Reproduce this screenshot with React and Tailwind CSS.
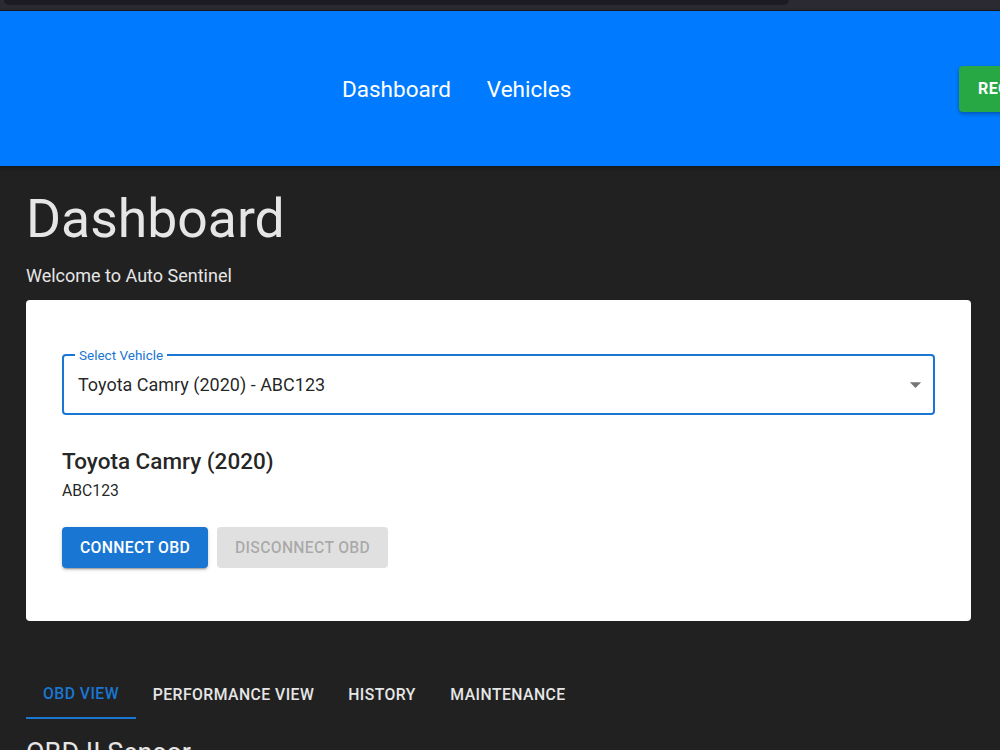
export default function App() {
  return (
    <div className="min-h-screen bg-[#212121] font-['Roboto',sans-serif] overflow-hidden">
      {/* Browser strip */}
      <div className="h-[11px] bg-[#2b2a33] border-b border-[#18181c] relative">
        <div className="absolute left-[4px] top-0 w-[785px] h-[5px] bg-[#1c1b22] rounded-b-md" />
      </div>

      {/* App bar */}
      <div className="h-[155px] bg-[#007bff] flex items-center overflow-hidden shadow-[0_2px_4px_rgba(0,0,0,0.35)] relative z-10">
        <div className="w-[959px] shrink-0 pl-[342px] pt-[2px] flex gap-9 text-white text-[22.5px] leading-none">
          <span>Dashboard</span>
          <span>Vehicles</span>
        </div>
        <button className="shrink-0 h-[46px] pl-[19px] pr-6 bg-[#28a745] text-white font-bold text-[16px] tracking-wide rounded-l-[4px] shadow-[0_2px_4px_rgba(0,0,0,0.3)]">
          REGISTER
        </button>
      </div>

      {/* Content */}
      <div className="px-[26px] pt-[21px]">
        <h1 className="text-[53.5px] font-normal leading-[63px] text-[#e6e6e6]">Dashboard</h1>
        <p className="mt-3 text-[18px] leading-[27px] text-[#e6e6e6]">Welcome to Auto Sentinel</p>

        <div className="mt-[11px] w-[945px] bg-white rounded pt-[54px] px-9 pb-[53px]">
          <div className="relative h-[61px] border-2 border-[#1976d2] rounded flex items-center pl-[14px] pr-[4px]">
            <span className="absolute -top-[10px] left-[11px] px-[4px] bg-white text-[13.5px] leading-[18px] text-[#1976d2]">
              Select Vehicle
            </span>
            <span className="flex-1 text-[18px] text-[rgba(0,0,0,0.87)]">Toyota Camry (2020) - ABC123</span>
            <svg width="27" height="27" viewBox="0 0 24 24" className="fill-[rgba(0,0,0,0.54)]">
              <path d="M7 10l5 5 5-5z" />
            </svg>
          </div>

          <h2 className="mt-[28px] text-[22.5px] font-medium leading-9 text-[rgba(0,0,0,0.87)]">Toyota Camry (2020)</h2>
          <p className="mt-[1px] text-[15.75px] leading-[22px] text-[rgba(0,0,0,0.87)]">ABC123</p>

          <div className="mt-[25px] flex gap-[9px]">
            <button className="h-[41px] px-[18px] bg-[#1976d2] text-white text-[15.75px] font-medium tracking-[0.3px] rounded shadow-[0_3px_1px_-2px_rgba(0,0,0,0.2),0_2px_2px_rgba(0,0,0,0.14),0_1px_5px_rgba(0,0,0,0.12)]">
              CONNECT OBD
            </button>
            <button className="h-[41px] px-[18px] bg-[#e0e0e0] text-[rgba(0,0,0,0.26)] text-[15.75px] font-medium tracking-[0.3px] rounded">
              DISCONNECT OBD
            </button>
          </div>
        </div>

        {/* Tabs */}
        <div className="mt-[49px] flex text-[15.75px] font-medium tracking-[0.45px]">
          <div className="w-[110px] h-[49px] flex items-center justify-center text-[#1976d2] border-b-2 border-[#1976d2]">OBD VIEW</div>
          <div className="w-[195px] h-[49px] flex items-center justify-center text-[#e6e6e6]">PERFORMANCE VIEW</div>
          <div className="w-[102px] h-[49px] flex items-center justify-center text-[#e6e6e6]">HISTORY</div>
          <div className="w-[150px] h-[49px] flex items-center justify-center text-[#e6e6e6]">MAINTENANCE</div>
        </div>

        <h3 className="mt-[16px] text-[27px] leading-9 text-[#e6e6e6]">OBD II Sensor</h3>
      </div>
    </div>
  )
}
